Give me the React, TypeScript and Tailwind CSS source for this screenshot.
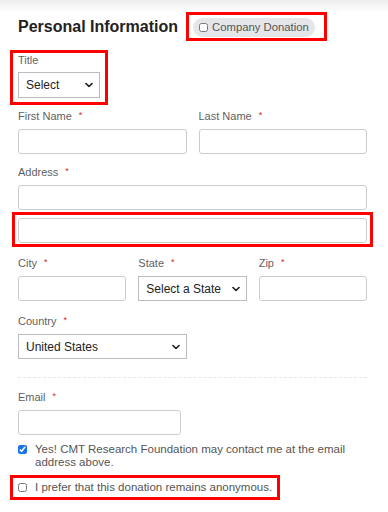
import type { ReactNode } from "react"

function Req() {
  return <span className="ml-[7px] align-top text-[9px] leading-[10px] text-[#e02424]">*</span>
}

function Label({ children, required = true }: { children: ReactNode; required?: boolean }) {
  return (
    <div className="mb-[6px] text-[11px] leading-[13px] text-[#5f5f5f]">
      {children}
      {required && <Req />}
    </div>
  )
}

function TextInput({ className = "" }: { className?: string }) {
  return (
    <input
      type="text"
      className={`block h-[25px] rounded-[3px] border border-[#c9cdd1] bg-white px-2 text-[12px] outline-none ${className}`}
    />
  )
}

function Chevron() {
  return (
    <svg
      className="pointer-events-none absolute right-[7px] top-1/2 -translate-y-1/2"
      width="8"
      height="5"
      viewBox="0 0 8 5"
      fill="none"
    >
      <path d="M1 1l3 3 3-3" stroke="#222" strokeWidth="1.7" strokeLinecap="round" strokeLinejoin="round" />
    </svg>
  )
}

function Select({ value, className = "" }: { value: string; className?: string }) {
  return (
    <div className={`relative ${className}`}>
      <select
        defaultValue={value}
        className="block h-full w-full appearance-none border border-[#b9bdc1] bg-white pl-[7px] pr-5 text-[12px] text-[#222] outline-none"
      >
        <option>{value}</option>
      </select>
      <Chevron />
    </div>
  )
}

export default function App() {
  return (
    <div className="min-h-screen bg-white font-['Liberation_Sans',Arial,sans-serif]">
      <div className="h-[12px] bg-linear-to-b from-[#ececec] to-white" />

      <div className="pl-[18px] pr-[21px]">
        {/* heading */}
        <div className="flex items-center">
          <h2 className="text-[16px] font-bold leading-[20px] text-[#222]">Personal Information</h2>
          <div className="ml-[8px] border-[3px] border-[#ff0000] pb-px pl-1 pr-[9px] pt-[3px]">
            <label className="flex h-[19px] items-center rounded-full bg-[#e4e6e9] pl-[6px] pr-[6px] text-[11.3px] text-[#555]">
              <input type="checkbox" className="m-0 mr-[4px] h-[9px] w-[9px]" />
              Company Donation
            </label>
          </div>
        </div>

        {/* title */}
        <div className="-ml-[8px] mt-[9px] w-fit border-[3px] border-[#ff0000] pb-[4px] pl-[5px] pr-[5px]">
          <div className="mt-[1px] mb-[5px] text-[11px] leading-[13px] text-[#5f5f5f]">Title</div>
          <Select value="Select" className="h-[26px] w-[82px]" />
        </div>

        {/* names */}
        <div className="mt-[5px] grid grid-cols-2 gap-x-[12px]">
          <div>
            <Label>First Name</Label>
            <TextInput className="w-full" />
          </div>
          <div>
            <Label>Last Name</Label>
            <TextInput className="w-full" />
          </div>
        </div>

        {/* address */}
        <div className="mt-[12px]">
          <Label>Address</Label>
          <TextInput className="w-full" />
          <div className="-mx-[6px] mt-[2px] border-[3px] border-[#ff0000] px-[3px] pb-px pt-[3px]">
            <TextInput className="w-full" />
          </div>
        </div>

        {/* city state zip */}
        <div className="mt-[10px] grid grid-cols-3 gap-x-[12px]">
          <div>
            <Label>City</Label>
            <TextInput className="w-full" />
          </div>
          <div>
            <Label>State</Label>
            <Select value="Select a State" className="h-[25px] w-full" />
          </div>
          <div>
            <Label>Zip</Label>
            <TextInput className="w-full" />
          </div>
        </div>

        {/* country */}
        <div className="mt-[14px]">
          <Label>Country</Label>
          <Select value="United States" className="h-[25px] w-[169px]" />
        </div>

        <div className="mt-[18px] border-t border-dashed border-[#e6e6e6]" />

        {/* email */}
        <div className="mt-[13px]">
          <Label>Email</Label>
          <TextInput className="w-[163px]" />
        </div>

        <label className="mt-[8px] flex items-start text-[11.5px] leading-[13px] text-[#555]">
          <input type="checkbox" defaultChecked className="m-0 mr-[8px] mt-[2px] h-[9px] w-[9px] shrink-0 accent-[#1a73e8]" />
          <span>Yes! CMT Research Foundation may contact me at the email address above.</span>
        </label>

        <div className="-ml-[8px] mt-[6px] w-fit border-[3px] border-[#ff0000] py-[3px] pl-[5px] pr-[5px]">
          <label className="flex items-center text-[11.5px] leading-[13px] text-[#555]">
            <input type="checkbox" className="m-0 mr-[8px] h-[9px] w-[9px] shrink-0" />
            I prefer that this donation remains anonymous.
          </label>
        </div>
      </div>
    </div>
  )
}
